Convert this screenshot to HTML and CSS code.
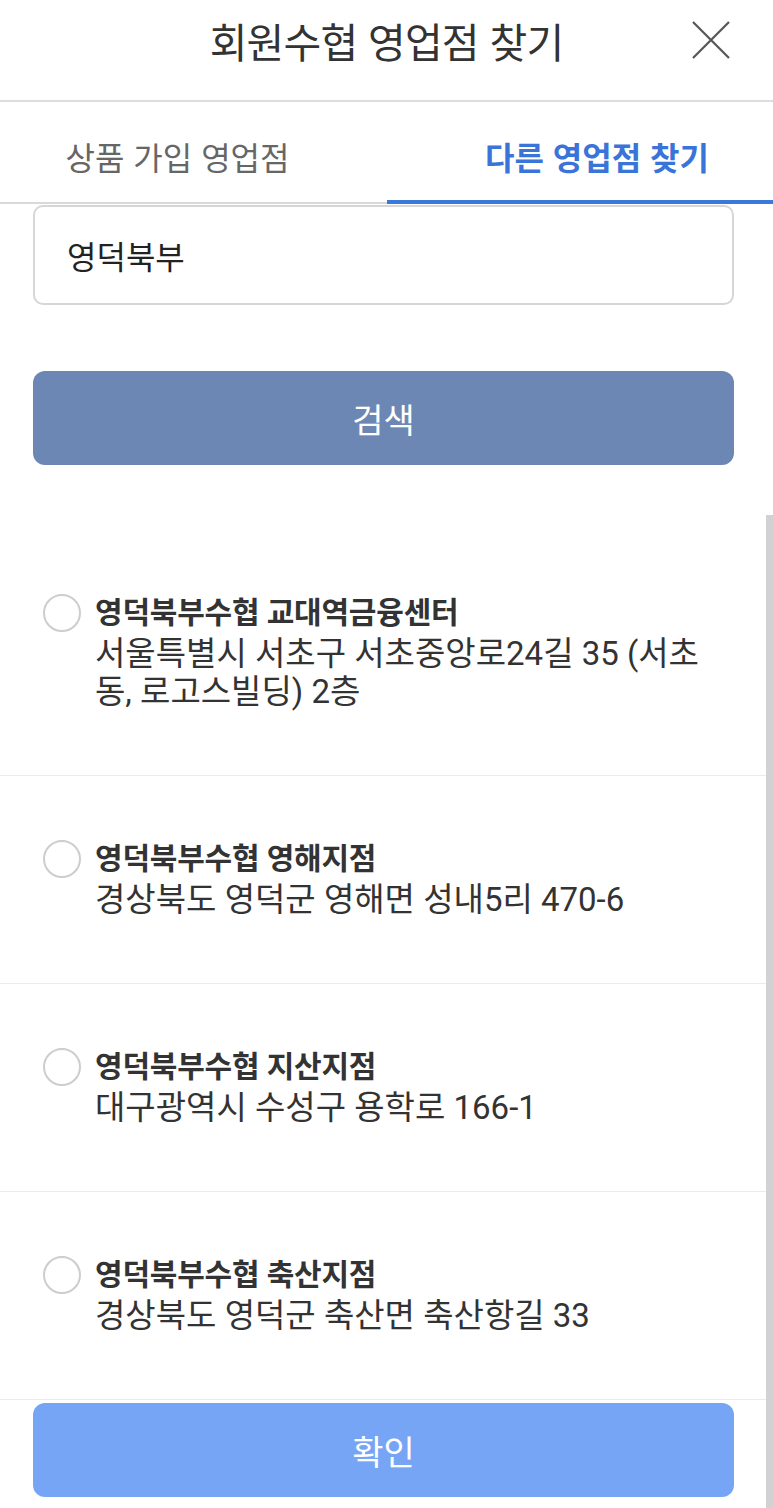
FILE: index.html
```html
<!DOCTYPE html>
<html lang="ko">
<head>
<meta charset="utf-8">
<title>회원수협 영업점 찾기</title>
<link rel="stylesheet" href="styles.css">
</head>
<body>
<div class="page">
  <header class="header">
    <div class="header-side"></div>
    <h1 class="header-title">회원수협 영업점 찾기</h1>
    <div class="header-side header-side-right">
      <button class="close-btn" aria-label="닫기">
        <svg width="38" height="38" viewBox="0 0 38 38"><path d="M1 1 L37 37 M37 1 L1 37" stroke="#555" stroke-width="2.2" fill="none"/></svg>
      </button>
    </div>
  </header>

  <nav class="tabs">
    <div class="tab tab-left">상품 가입 영업점</div>
    <div class="tab tab-right tab-active">다른 영업점 찾기</div>
  </nav>

  <input class="search-input" type="text" value="영덕북부">
  <button class="btn btn-search">검색</button>

  <ul class="results">
    <li class="item">
      <span class="radio"></span>
      <div class="item-text">
        <div class="item-title">영덕북부수협 교대역금융센터</div>
        <div class="item-addr">서울특별시 서초구 서초중앙로24길 35 (서초<br>동, 로고스빌딩) 2층</div>
      </div>
    </li>
    <li class="item">
      <span class="radio"></span>
      <div class="item-text">
        <div class="item-title">영덕북부수협 영해지점</div>
        <div class="item-addr">경상북도 영덕군 영해면 성내5리 470-6</div>
      </div>
    </li>
    <li class="item">
      <span class="radio"></span>
      <div class="item-text">
        <div class="item-title">영덕북부수협 지산지점</div>
        <div class="item-addr">대구광역시 수성구 용학로 166-1</div>
      </div>
    </li>
    <li class="item">
      <span class="radio"></span>
      <div class="item-text">
        <div class="item-title">영덕북부수협 축산지점</div>
        <div class="item-addr">경상북도 영덕군 축산면 축산항길 33</div>
      </div>
    </li>
  </ul>

  <button class="btn btn-confirm">확인</button>
  <div class="scroll-thumb"></div>
</div>
</body>
</html>
```
FILE: styles.css
```css
* { box-sizing: border-box; }

html, body {
  margin: 0;
  padding: 0;
  background: #ffffff;
}

body {
  font-family: Roboto, "Noto Sans CJK KR", sans-serif;
  color: #333333;
}

.page {
  position: relative;
  width: 773px;
  min-height: 1508px;
  overflow: hidden;
}

/* Header */
.header {
  display: grid;
  grid-template-columns: 1fr auto 1fr;
  align-items: center;
  height: 102px;
  padding-bottom: 20px;
  border-bottom: 2px solid #dddddd;
}

.header-title {
  margin: 0;
  font-family: "Noto Sans CJK KR", sans-serif;
  font-size: 41px;
  font-weight: 400;
  letter-spacing: -0.8px;
  color: #333333;
  line-height: 1;
}

.header-side-right {
  display: flex;
  justify-content: flex-end;
  padding-right: 43px;
}

.close-btn {
  border: 0;
  background: none;
  padding: 0;
  width: 38px;
  height: 38px;
  display: block;
}

.close-btn svg { display: block; }

/* Tabs */
.tabs {
  display: grid;
  grid-template-columns: 387px 386px;
  height: 102px;
}

.tab {
  display: flex;
  align-items: center;
  justify-content: center;
  font-family: "Noto Sans CJK KR", sans-serif;
  font-size: 32px;
  color: #666666;
  padding-top: 8px;
  border-bottom: 2px solid #d9d9d9;
}

.tab-left { padding-right: 32px; }

.tab-right { padding-left: 34px; }

.tab-active {
  color: #3a74d8;
  font-weight: 700;
  border-bottom: 4px solid #3b78dc;
  padding-top: 10px;
}

/* Search */
.search-input {
  display: block;
  width: 701px;
  height: 100px;
  margin: 1px 0 0 33px;
  padding: 0 0 0 32px;
  border: 2px solid #d6d6d6;
  border-radius: 10px;
  font-family: "Noto Sans CJK KR", sans-serif;
  font-size: 32px;
  color: #222222;
  background: #ffffff;
  outline: none;
}

.btn {
  display: block;
  width: 701px;
  height: 94px;
  margin-left: 33px;
  border: 0;
  border-radius: 12px;
  color: #ffffff;
  font-family: "Noto Sans CJK KR", sans-serif;
  font-size: 34px;
  padding: 0;
}

.btn-search {
  margin-top: 66px;
  background: #6d87b4;
}

.btn-confirm {
  margin-top: 3px;
  background: #77a5f5;
}

/* Results */
.results {
  list-style: none;
  margin: 65px 0 0 0;
  padding: 0;
}

.item {
  display: flex;
  align-items: flex-start;
  gap: 14px;
  padding: 61px 40px 64px 43px;
  border-bottom: 1px solid #ebebeb;
}

.radio {
  flex: 0 0 auto;
  width: 38px;
  height: 38px;
  margin-top: 3px;
  border: 2px solid #cdcdcd;
  border-radius: 50%;
  background: #ffffff;
}

.item-text {
  flex: 1 1 auto;
  min-width: 0;
}

.item-title {
  font-size: 30px;
  font-weight: 700;
  line-height: 44px;
  letter-spacing: -0.2px;
  color: #333333;
}

.item-addr {
  font-size: 33px;
  line-height: 38px;
  color: #333333;
}

/* Scroll thumb overlay */
.scroll-thumb {
  position: absolute;
  right: 0;
  top: 515px;
  bottom: 0;
  width: 7px;
  background: #d2d2d2;
}
```
